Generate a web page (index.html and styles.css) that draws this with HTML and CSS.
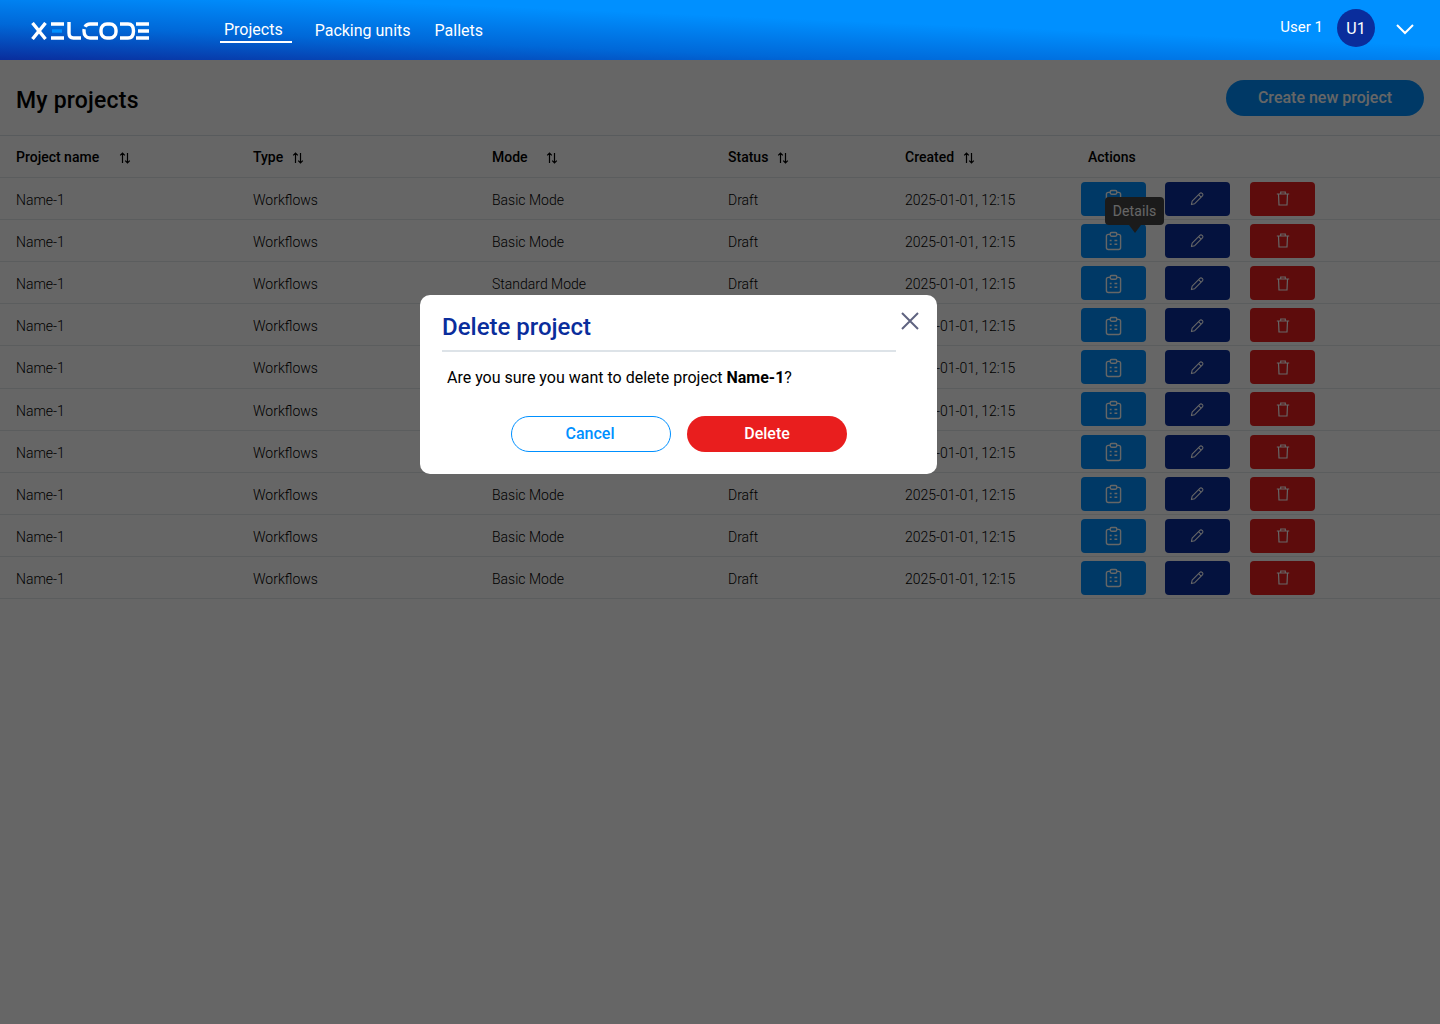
FILE: index.html
```html
<!DOCTYPE html>
<html lang="en">
<head>
  <meta charset="UTF-8">
  <title>My projects | Xelcode</title>
  <link rel="stylesheet" href="styles.css">
</head>
<body>

  <svg class="icon-defs" width="0" height="0">
    <symbol id="i-sort" viewBox="0 0 12 12">
      <path d="M3.500 11V1.200M1.200 3.400l2.300-2.300 2.300 2.300M8.500 1v9.800M6.200 8.600l2.300 2.300 2.300-2.300" fill="none" stroke="currentColor" stroke-width="1.200"/>
    </symbol>
    <symbol id="i-details" viewBox="0 0 18 20">
      <path d="M5.500 3H3.600C2.400 3 1.500 3.900 1.500 5v12c0 1.100.9 2 2.100 2h10.800c1.200 0 2.100-.9 2.100-2V5c0-1.100-.9-2-2.100-2h-1.900" fill="none" stroke="currentColor" stroke-width="1.500"/>
      <rect x="5.500" y="1" width="7" height="4" rx="1.500" fill="none" stroke="currentColor" stroke-width="1.500"/>
      <path d="M5 9.500h2M10 9.500h3M5 13.500h2M10 13.500h3" fill="none" stroke="currentColor" stroke-width="1.600"/>
    </symbol>
    <symbol id="i-edit" viewBox="0 0 14 14">
      <path d="M1.300 12.700l.7-3.300 7.200-7.200c.6-.6 1.500-.6 2.100 0l.3.300c.6.6.6 1.500 0 2.100l-7.200 7.200zM8 3.400l2.600 2.600" fill="none" stroke="currentColor" stroke-width="1" stroke-linejoin="round"/>
    </symbol>
    <symbol id="i-trash" viewBox="0 0 14 15">
      <path d="M.8 3h12.400M4.700 3V1h4.600v2M2.500 3l.5 11h8l.5-11" fill="none" stroke="currentColor" stroke-width="1.200"/>
    </symbol>
  </svg>

  <header class="topbar">
    <svg class="logo" width="118" height="18" viewBox="0 0 118 18" role="img" aria-label="Xelcode">
      <g fill="none" stroke="#fff" stroke-width="3.400">
        <path d="M1.500 1l13 16M14.500 1l-13 16"/>
        <path d="M20 2h13M20 16h13"/>
        <path d="M38 0v11c0 3 1.500 5 4.500 5H50"/>
        <path d="M67 2h-8c-3.500 0-6 2.500-6 7s2.500 7 6 7h8" stroke-dasharray="14 2.500 30"/>
        <rect x="70" y="2" width="15" height="14" rx="6"/>
        <path d="M89 2h8c3.500 0 5.500 2.500 5.500 7s-2 7-5.500 7h-8"/>
        <path d="M105 2h13M107 9h11M105 16h13"/>
      </g>
      <path d="M21 7.300h10v3.400h-10z" fill="#0090ff"/>
    </svg>
    <nav class="nav">
      <a class="nav-link active" href="#">Projects</a>
      <a class="nav-link" href="#">Packing units</a>
      <a class="nav-link" href="#">Pallets</a>
    </nav>
    <div class="user">
      <span class="user-name">User 1</span>
      <span class="avatar">U1</span>
      <svg class="chevron" width="20" height="12" viewBox="0 0 20 12"><path d="M2 2l8 8 8-8" fill="none" stroke="#fff" stroke-width="2"/></svg>
    </div>
  </header>

  <main>
    <div class="page-head">
      <h1>My projects</h1>
      <button class="btn-create">Create new project</button>
    </div>

    <table class="projects">
      <thead>
        <tr>
          <th class="col-name">Project name <svg class="sort wide"><use href="#i-sort"/></svg></th>
          <th class="col-type">Type <svg class="sort"><use href="#i-sort"/></svg></th>
          <th class="col-mode">Mode <svg class="sort wide"><use href="#i-sort"/></svg></th>
          <th class="col-status">Status <svg class="sort"><use href="#i-sort"/></svg></th>
          <th class="col-created">Created <svg class="sort"><use href="#i-sort"/></svg></th>
          <th class="col-actions"><span class="actions-label">Actions</span></th>
        </tr>
      </thead>
      <tbody>
        <tr>
          <td>Name-1</td><td>Workflows</td><td>Basic Mode</td><td>Draft</td><td>2025-01-01, 12:15</td>
          <td class="actions">
            <button class="act act-details"><svg class="ic-details"><use href="#i-details"/></svg></button>
            <button class="act act-edit"><svg class="ic-edit"><use href="#i-edit"/></svg></button>
            <button class="act act-delete"><svg class="ic-trash"><use href="#i-trash"/></svg></button>
          </td>
        </tr>
        <tr>
          <td>Name-1</td><td>Workflows</td><td>Basic Mode</td><td>Draft</td><td>2025-01-01, 12:15</td>
          <td class="actions">
            <button class="act act-details"><svg class="ic-details"><use href="#i-details"/></svg><span class="tooltip">Details</span></button>
            <button class="act act-edit"><svg class="ic-edit"><use href="#i-edit"/></svg></button>
            <button class="act act-delete"><svg class="ic-trash"><use href="#i-trash"/></svg></button>
          </td>
        </tr>
        <tr>
          <td>Name-1</td><td>Workflows</td><td>Standard Mode</td><td>Draft</td><td>2025-01-01, 12:15</td>
          <td class="actions">
            <button class="act act-details"><svg class="ic-details"><use href="#i-details"/></svg></button>
            <button class="act act-edit"><svg class="ic-edit"><use href="#i-edit"/></svg></button>
            <button class="act act-delete"><svg class="ic-trash"><use href="#i-trash"/></svg></button>
          </td>
        </tr>
        <tr>
          <td>Name-1</td><td>Workflows</td><td>Basic Mode</td><td>Draft</td><td>2025-01-01, 12:15</td>
          <td class="actions">
            <button class="act act-details"><svg class="ic-details"><use href="#i-details"/></svg></button>
            <button class="act act-edit"><svg class="ic-edit"><use href="#i-edit"/></svg></button>
            <button class="act act-delete"><svg class="ic-trash"><use href="#i-trash"/></svg></button>
          </td>
        </tr>
        <tr>
          <td>Name-1</td><td>Workflows</td><td>Basic Mode</td><td>Draft</td><td>2025-01-01, 12:15</td>
          <td class="actions">
            <button class="act act-details"><svg class="ic-details"><use href="#i-details"/></svg></button>
            <button class="act act-edit"><svg class="ic-edit"><use href="#i-edit"/></svg></button>
            <button class="act act-delete"><svg class="ic-trash"><use href="#i-trash"/></svg></button>
          </td>
        </tr>
        <tr>
          <td>Name-1</td><td>Workflows</td><td>Basic Mode</td><td>Draft</td><td>2025-01-01, 12:15</td>
          <td class="actions">
            <button class="act act-details"><svg class="ic-details"><use href="#i-details"/></svg></button>
            <button class="act act-edit"><svg class="ic-edit"><use href="#i-edit"/></svg></button>
            <button class="act act-delete"><svg class="ic-trash"><use href="#i-trash"/></svg></button>
          </td>
        </tr>
        <tr>
          <td>Name-1</td><td>Workflows</td><td>Basic Mode</td><td>Draft</td><td>2025-01-01, 12:15</td>
          <td class="actions">
            <button class="act act-details"><svg class="ic-details"><use href="#i-details"/></svg></button>
            <button class="act act-edit"><svg class="ic-edit"><use href="#i-edit"/></svg></button>
            <button class="act act-delete"><svg class="ic-trash"><use href="#i-trash"/></svg></button>
          </td>
        </tr>
        <tr>
          <td>Name-1</td><td>Workflows</td><td>Basic Mode</td><td>Draft</td><td>2025-01-01, 12:15</td>
          <td class="actions">
            <button class="act act-details"><svg class="ic-details"><use href="#i-details"/></svg></button>
            <button class="act act-edit"><svg class="ic-edit"><use href="#i-edit"/></svg></button>
            <button class="act act-delete"><svg class="ic-trash"><use href="#i-trash"/></svg></button>
          </td>
        </tr>
        <tr>
          <td>Name-1</td><td>Workflows</td><td>Basic Mode</td><td>Draft</td><td>2025-01-01, 12:15</td>
          <td class="actions">
            <button class="act act-details"><svg class="ic-details"><use href="#i-details"/></svg></button>
            <button class="act act-edit"><svg class="ic-edit"><use href="#i-edit"/></svg></button>
            <button class="act act-delete"><svg class="ic-trash"><use href="#i-trash"/></svg></button>
          </td>
        </tr>
        <tr>
          <td>Name-1</td><td>Workflows</td><td>Basic Mode</td><td>Draft</td><td>2025-01-01, 12:15</td>
          <td class="actions">
            <button class="act act-details"><svg class="ic-details"><use href="#i-details"/></svg></button>
            <button class="act act-edit"><svg class="ic-edit"><use href="#i-edit"/></svg></button>
            <button class="act act-delete"><svg class="ic-trash"><use href="#i-trash"/></svg></button>
          </td>
        </tr>
      </tbody>
    </table>
  </main>

  <div class="overlay"></div>

  <div class="modal">
    <button class="modal-close" aria-label="Close">
      <svg width="18" height="18" viewBox="0 0 18 18"><path d="M1 1l16 16M17 1L1 17" fill="none" stroke="#5f6380" stroke-width="2"/></svg>
    </button>
    <h2>Delete project</h2>
    <p>Are you sure you want to delete project <b>Name-1</b>?</p>
    <div class="modal-buttons">
      <button class="btn-cancel">Cancel</button>
      <button class="btn-delete">Delete</button>
    </div>
  </div>

</body>
</html>
```

FILE: styles.css
```css
html, body {
  height: 100%;
}

body {
  font-family: Roboto, "Liberation Sans", sans-serif;
  background: #fff;
  margin: 0;
  position: relative;
  overflow: hidden;
}

button {
  font-family: inherit;
  border: none;
  cursor: pointer;
}

.icon-defs {
  position: absolute;
}

/* top bar */
.topbar {
  position: relative;
  z-index: 2;
  height: 60px;
  display: flex;
  align-items: center;
  padding: 0 25px 0 31px;
  background: linear-gradient(to top right, #0a2d9c 0%, #0068d8 30%, #0090ff 62%);
  color: #fff;
}

.logo {
  margin-top: 2px;
  flex: none;
}

.nav {
  display: flex;
  align-items: flex-start;
  margin-left: 71px;
  height: 60px;
}

.nav-link {
  color: #fff;
  text-decoration: none;
  font-size: 16px;
  line-height: 20px;
  padding: 21px 0 0;
  margin-right: 24px;
}

.nav-link.active {
  padding: 20px 9px 1px 4px;
  margin-right: 23px;
  height: 20px;
  border-bottom: 2px solid #fff;
}

.user {
  margin-left: auto;
  display: flex;
  align-items: center;
  margin-top: -4px;
}

.user-name {
  font-size: 15px;
  line-height: 18px;
  margin: -2px 14px 0 0;
}

.avatar {
  width: 38px;
  height: 38px;
  border-radius: 50%;
  background: #0a2d9c;
  display: flex;
  align-items: center;
  justify-content: center;
  font-size: 16px;
  margin-right: 20px;
}

.chevron {
  margin-top: 1px;
}

/* page */
.page-head {
  height: 75px;
  display: flex;
  align-items: center;
  justify-content: space-between;
  padding: 0 16px;
  border-bottom: 1px solid #dde3e8;
}

h1 {
  margin: 6px 0 0;
  font-size: 23px;
  font-weight: 500;
  letter-spacing: 0.2px;
  color: #000;
}

.btn-create {
  width: 198px;
  height: 36px;
  padding: 0 0 2px;
  border-radius: 18px;
  background: #0090ff;
  color: #fff;
  font-size: 16px;
  font-weight: 500;
  margin-top: 1px;
}

.projects {
  width: 100%;
  table-layout: fixed;
  border-collapse: collapse;
}

.projects th {
  height: 41px;
  padding: 0;
  text-align: left;
  font-size: 14px;
  font-weight: 500;
  color: #000;
  border-bottom: 1px solid #e4e8ec;
}

.projects td {
  height: 38.22px;
  padding: 2.9px 0 0;
  font-size: 14px;
  line-height: 16px;
  font-weight: 300;
  color: #000;
  border-bottom: 1px solid #e4e8ec;
}

.projects th:first-child,
.projects td:first-child {
  padding-left: 16px;
}

.col-name { width: 237px; }
.col-type { width: 239px; }
.col-mode { width: 236px; }
.col-status { width: 177px; }
.col-created { width: 176px; }

.actions-label {
  margin-left: 7px;
}

.sort {
  width: 12px;
  height: 12px;
  margin-left: 5px;
  vertical-align: -2px;
}

.sort.wide {
  margin-left: 16px;
}

.col-mode .sort.wide {
  margin-left: 15px;
}

.projects td.actions {
  height: 40.54px;
  padding: 0.58px 0 0;
  white-space: nowrap;
  font-size: 0;
}

.act {
  position: relative;
  width: 65px;
  height: 34px;
  border-radius: 4px;
  padding: 0;
  margin-right: 20px;
  color: #fff;
  vertical-align: middle;
  display: inline-flex;
  align-items: center;
  justify-content: center;
}

.act-details { background: #0090ff; margin-right: 19px; }
.act-edit { background: #0a2d9c; }
.act-delete { background: #e91e1e; }

.ic-details { width: 17px; height: 20px; margin-top: 1px; }
.ic-edit { width: 15px; height: 15px; }
.ic-trash { width: 14px; height: 15px; }

.tooltip {
  position: absolute;
  left: 24px;
  top: -27px;
  width: 59px;
  height: 28px;
  border-radius: 4px;
  background: #454545;
  color: #fff;
  font-size: 14px;
  line-height: 28px;
  text-align: center;
  letter-spacing: 0.1px;
}

.tooltip::after {
  content: "";
  position: absolute;
  left: 24px;
  top: 28px;
  border: 6px solid transparent;
  border-top: 8px solid #454545;
  border-bottom: 0;
}

/* dialog */
.overlay {
  position: absolute;
  z-index: 1;
  left: 0;
  right: 0;
  top: 60px;
  bottom: 0;
  background: rgba(0,0,0,0.6);
}

.modal {
  position: absolute;
  z-index: 3;
  left: 420px;
  top: 295px;
  width: 517px;
  height: 179px;
  box-sizing: border-box;
  padding: 18px 41px 0 22px;
  background: #fff;
  border-radius: 10px;
}

.modal h2 {
  margin: 0;
  height: 37px;
  font-size: 24px;
  line-height: 29px;
  font-weight: 500;
  color: #0a2d9c;
  border-bottom: 2px solid #dde3e8;
}

.modal p {
  margin: 16px 0 0 5px;
  font-size: 16px;
  line-height: 20px;
  color: #000;
}

.modal-close {
  position: absolute;
  right: 18px;
  top: 17px;
  padding: 0;
  background: none;
  line-height: 0;
}

.modal-buttons {
  display: flex;
  justify-content: center;
  gap: 16px;
  margin: 28px 0 0 20px;
}

.btn-cancel, .btn-delete {
  width: 160px;
  height: 36px;
  padding: 0 2px 2px 0;
  border-radius: 18px;
  font-size: 16px;
  font-weight: 500;
}

.btn-cancel {
  background: #fff;
  color: #0090ff;
  border: 1px solid #0090ff;
}

.btn-delete {
  padding-right: 0;
  background: #e91e1e;
  color: #fff;
}
```
